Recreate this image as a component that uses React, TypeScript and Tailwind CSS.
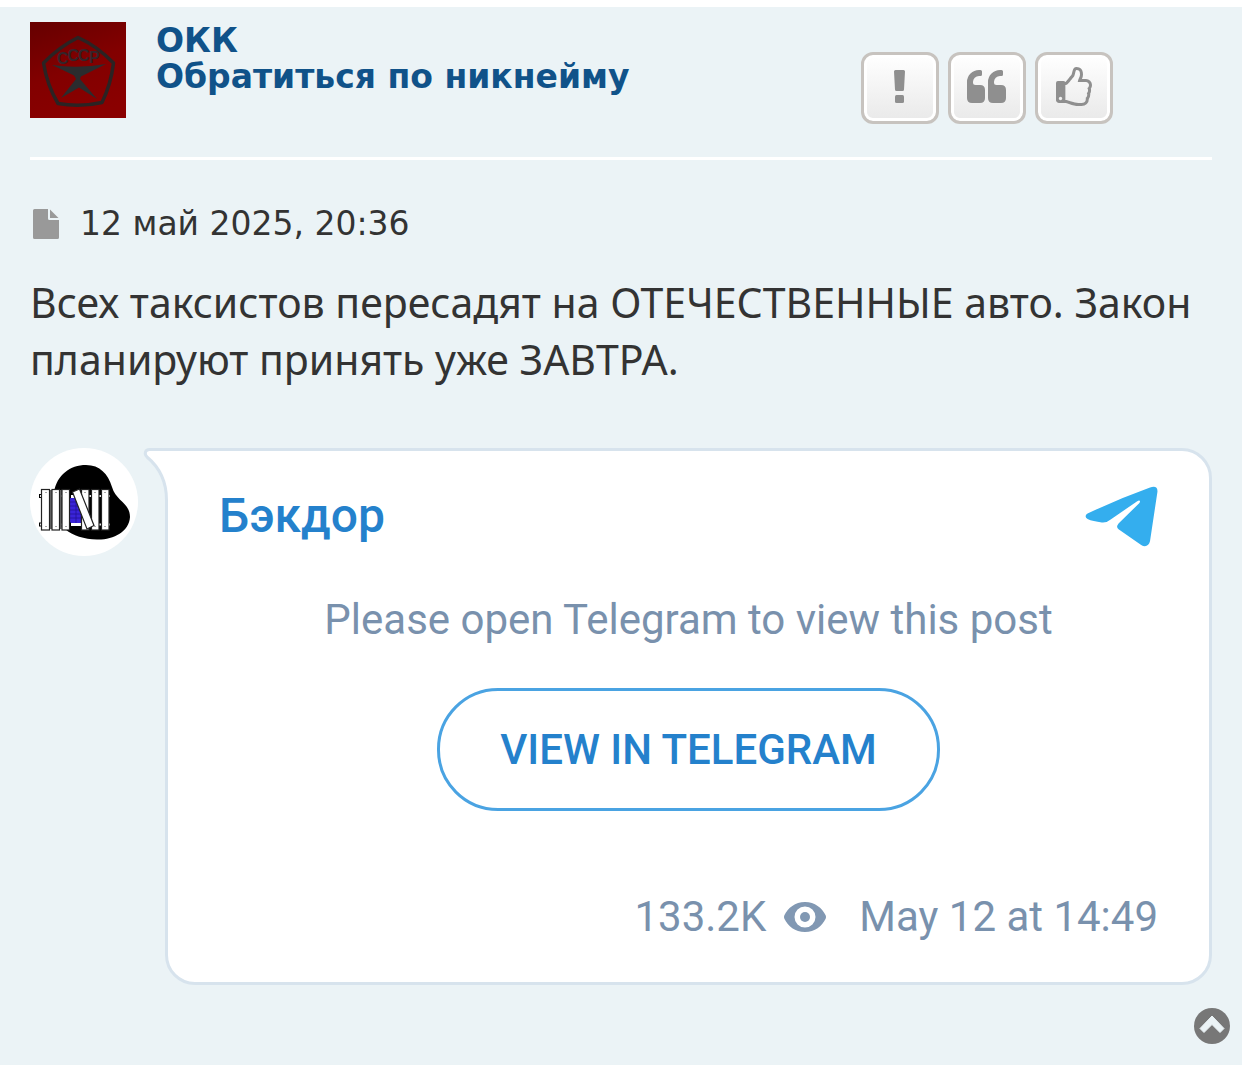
import React from "react";

function UserAvatar() {
  return (
    <svg viewBox="0 0 96 96" className="size-24 shrink-0" role="img" aria-label="Аватар">
      <defs>
        <linearGradient id="red" x1="0.2" y1="0" x2="0.6" y2="1">
          <stop offset="0" stopColor="#690000" />
          <stop offset="0.5" stopColor="#820000" />
          <stop offset="1" stopColor="#8a0000" />
        </linearGradient>
      </defs>
      <rect width="96" height="96" fill="url(#red)" />
      <path d="M48 15.500Q67 24 83.500 41Q81 62 72 80.500Q50 85.500 28 81.500Q17 63 13.500 41Q29 25 48 15.500Z" stroke="#2b2323" strokeWidth="3.500" strokeLinejoin="round" fill="none" />
      <path d="M22 43Q48 47 76 42Q62 49 51 54.500L50 57L67 77L49 65.500L31 76L46 57L44 53.500Q33 48 22 43Z" fill="#2b2c2e" />
      <text x="27 37.500 48 59" y="41.500 39 39 40.500" fontSize="16" fontWeight="700" fontFamily="Liberation Sans, sans-serif" fill="#33252a">СССР</text>
    </svg>
  );
}

function ChannelAvatar() {
  return (
    <svg viewBox="0 0 108 108" className="size-[108px] shrink-0" role="img" aria-label="Бэкдор">
      <circle cx="54" cy="54" r="54" fill="#fff" />
      <path d="M24 44C27 27 40 17 56 17C70 17 78 26 82 39C86 53 100 55 100 69C99 84 83 92 67 91.500C54 91 43 88 35 81L24 70Z" fill="#000" />
      <rect x="40" y="47" width="15" height="31" fill="#fff" />
      <rect x="40" y="50" width="15" height="25" fill="#3a24d8" />
      <path d="M40 54h15M40 58h15M40 62h15M40 66h15M40 70h15M46 50v25M51 50v25" stroke="#20108f" strokeWidth="0.700" />
      <g fill="#fff" stroke="#000" strokeWidth="1">
        <rect x="9.500" y="46.500" width="31" height="3" />
        <rect x="9.500" y="75" width="31" height="3" />
        <rect x="53" y="46.500" width="27.500" height="3" />
        <rect x="53" y="75" width="27.500" height="3" />
      </g>
      <path d="M20.800 42v39M30.500 42v39" stroke="#666" strokeWidth="2.500" />
      <g fill="#fff" stroke="#222" strokeWidth="1.200">
        <rect x="11.500" y="41.500" width="8" height="40.500" />
        <rect x="22" y="41.500" width="7.500" height="40.500" />
        <rect x="32" y="41.500" width="7.500" height="40.500" />
        <rect x="51.500" y="41.500" width="7.500" height="40.500" />
        <rect x="61.500" y="41.500" width="7.500" height="40.500" />
        <rect x="71.500" y="41.500" width="7.500" height="40.500" />
        <path d="M42.500 44L49.500 41L64 77.500L57 81Z" />
      </g>
      <path d="M16 44v1M26 44v1M36 44v1M55 44v1M65 44v1M75 44v1M16 78v1M26 78v1M36 78v1M65 78v1M75 78v1" stroke="#555" />
    </svg>
  );
}

function ExclamationIcon() {
  return (
    <svg viewBox="0 0 12 36" className="h-9 w-3" fill="currentColor" aria-hidden="true">
      <path d="M1.500 0H9.500Q11 0 11 1.500L10 19.500Q10 21 8.500 21H2.500Q1 21 1 19.500L0 1.500Q0 0 1.500 0Z" />
      <rect x="1" y="25" width="9" height="8" rx="1.500" />
    </svg>
  );
}

function QuoteIcon() {
  const mark =
    "M5 33Q0 33 0 28V12A12 12 0 0 1 12 0H13.500Q15 0 15 1.500V4.500Q15 6 13.500 6H12A6 6 0 0 0 6 12V12.500Q6 15 8.500 15H13Q18 15 18 20V28Q18 33 13 33Z";
  return (
    <svg viewBox="0 0 40 36" className="h-9 w-10" fill="currentColor" aria-hidden="true">
      <path d={mark} />
      <path d={mark} transform="translate(21 0)" />
    </svg>
  );
}

function ThumbIcon() {
  return (
    <svg viewBox="0 0 1792 1792" className="size-[42px]" fill="currentColor" aria-hidden="true">
      <path d="M1536 768q0-51-39-89.500t-89-38.500h-352q0-58 48-159.500t48-160.500q0-98-32-145t-128-47q-26 26-38 85t-30.500 125.500-59.500 109.500q-22 23-77 91-4 5-23 30t-31.500 41-34.500 42.500-40 44-38.500 35.500-40 27-35.500 9h-32v640h32q13 0 31.500 3t33 6.500 38 11 35 11.500 35.500 12.500 29 10.500q211 73 342 73h121q192 0 192-167 0-26-5-56 30-16 47.500-52.500t17.500-73.500-18-69q53-50 53-119 0-25-10-55.500t-25-47.500q32-1 53.500-47t21.500-81zm128-1q0 89-49 163 9 33 9 69 0 77-38 144 3 21 3 43 0 101-60 178 1 139-85 219.500t-227 80.500h-129q-96 0-189.500-22.500t-216.500-65.500q-116-40-138-40h-288q-53 0-90.500-37.500t-37.500-90.500v-640q0-53 37.500-90.500t90.500-37.500h274q36-24 137-155 58-75 107-128 24-25 35.500-85.500t30.500-126.500 62-108q39-37 90-37 84 0 151 32.500t102 101.500 35 186q0 93-48 192h176q104 0 180 76t76 179z" />
      <rect x="128" y="600" width="400" height="860" rx="80" />
      <circle cx="320" cy="1344" r="70" fill="#efefef" />
    </svg>
  );
}

function PostButton({ label, children }: { label: string; children: React.ReactNode }) {
  return (
    <button
      type="button"
      aria-label={label}
      className="flex h-[72px] w-[78px] items-center justify-center rounded-xl border-[3px] border-[#c7c3bf] bg-linear-to-b from-white to-[#e9e9e9] text-[#8f8f8f] shadow-[inset_0_0_0_3px_#fff]"
    >
      {children}
    </button>
  );
}

function TelegramPost() {
  return (
    <section className="flex gap-[27px]">
      <ChannelAvatar />
      <div className="relative min-w-0 flex-1 rounded-[30px] rounded-tl-none border-[3px] border-[#d7e3ed] bg-white px-[51px] pt-[33px] pb-[37px] font-[Roboto,sans-serif]">
        <svg viewBox="0 0 25 60" className="absolute -top-[3px] -left-[25px] h-[60px] w-[25px]" aria-hidden="true">
          <path d="M25 1.500H6.500C2 1.500 1 6 4 9C16 19 23.500 34 23.500 52V60H25Z" fill="#fff" />
          <path d="M25 1.500H6.500C2 1.500 1 6 4 9C16 19 23.500 34 23.500 52V60" fill="none" stroke="#d7e3ed" strokeWidth="3" />
        </svg>
        <header className="flex items-start justify-between">
          <a href="#channel" className="text-[48px] leading-[64px] font-medium text-[#2481cc]">Бэкдор</a>
          <a href="#telegram" aria-label="Telegram">
            <svg viewBox="0 0 74 62" className="mt-0.5 h-[61px] w-[73px]" fill="#34aeee" aria-hidden="true">
              <path d="M2.500 28Q34 13 66 1.500C71 0 74 1 73.500 6L66 56C65 61 61 62.500 57 60L34 44Q31 41.500 34 38L55 17.500C57 15 55 14 53 15.500L26 34Q22 37.500 17 37Q8 36 2.500 33.500Q-1.500 30.500 2.500 28Z" />
            </svg>
          </a>
        </header>
        <p className="mt-11 text-center text-[42px] leading-[56px] text-[#7991ad]">Please open Telegram to view this post</p>
        <div className="mt-10 flex justify-center">
          <a href="#view" className="rounded-[61px] border-[3px] border-[#4aa3e2] px-[60px] py-[30px] text-[42px] leading-[57px] font-medium text-[#2481cc]">
            VIEW IN TELEGRAM
          </a>
        </div>
        <footer className="mt-[78px] flex items-center justify-end text-[42px] leading-[56px] text-[#7991ad]">
          <span>133.2K</span>
          <svg viewBox="0 0 42 30" className="mr-[33px] ml-[18px] h-[30px] w-[42px]" fill="#8198b3" aria-label="views" role="img">
            <path fillRule="evenodd" d="M21 0C31 0 38 6 41.500 13Q42.500 15 41.500 17C38 24 31 30 21 30S4 24 .5 17Q-.5 15 .5 13C4 6 11 0 21 0ZM21 4.500A10.500 10.500 0 1 0 21 25.500A10.500 10.500 0 1 0 21 4.500Z" />
            <circle cx="21" cy="15" r="5" />
          </svg>
          <time>May 12 at 14:49</time>
        </footer>
      </div>
    </section>
  );
}

export default function App() {
  return (
    <div className="min-h-screen bg-white pt-[7px]">
      <main className="relative min-h-[calc(100vh-7px)] bg-[#ebf3f6] px-[30px] pt-[15px] pb-16 font-[DejaVu_Sans,sans-serif] text-[#333]">
        <article>
          <header className="flex items-start border-b-[3px] border-white pb-[33px]">
            <UserAvatar />
            <div className="mt-px ml-[30px] flex flex-1 flex-col items-start text-[33px] leading-9 font-bold text-[#105289]">
              <a href="#user">ОКК</a>
              <a href="#mention">Обратиться по никнейму</a>
            </div>
            <div className="mt-[30px] mr-[99px] flex gap-[9px]">
              <PostButton label="Пожаловаться"><ExclamationIcon /></PostButton>
              <PostButton label="Цитата"><QuoteIcon /></PostButton>
              <PostButton label="Нравится"><ThumbIcon /></PostButton>
            </div>
          </header>
          <p className="mt-11 flex items-center text-[33px] leading-10">
            <svg viewBox="0 0 26 30" className="mr-[21px] ml-[3px] h-[30px] w-[26px]" fill="#999" aria-hidden="true">
              <path d="M1.500 0H15V9.500Q15 11 16.500 11H26V28.500Q26 30 24.500 30H1.500Q0 30 0 28.500V1.500Q0 0 1.500 0Z" />
              <path d="M17 .5L25.500 9H17Z" />
            </svg>
            <time>12 май 2025, 20:36</time>
          </p>
          <p className="mt-[30px] mb-[60px] font-[Noto_Sans,sans-serif] text-[41px] leading-[57px]">
            Всех таксистов пересадят на ОТЕЧЕСТВЕННЫЕ авто. Закон планируют принять уже ЗАВТРА.
          </p>
          <TelegramPost />
        </article>
        <button type="button" aria-label="Наверх" className="absolute right-3 bottom-[21px]">
          <svg viewBox="0 0 36 36" className="size-9" aria-hidden="true">
            <circle cx="18" cy="18" r="18" fill="#777" />
            <path d="M18 8L30 20.500L26 24.500L18 16.500L10 24.500L6 20.500Z" fill="#ebf3f6" stroke="#ebf3f6" strokeLinejoin="round" />
          </svg>
        </button>
      </main>
    </div>
  );
}
